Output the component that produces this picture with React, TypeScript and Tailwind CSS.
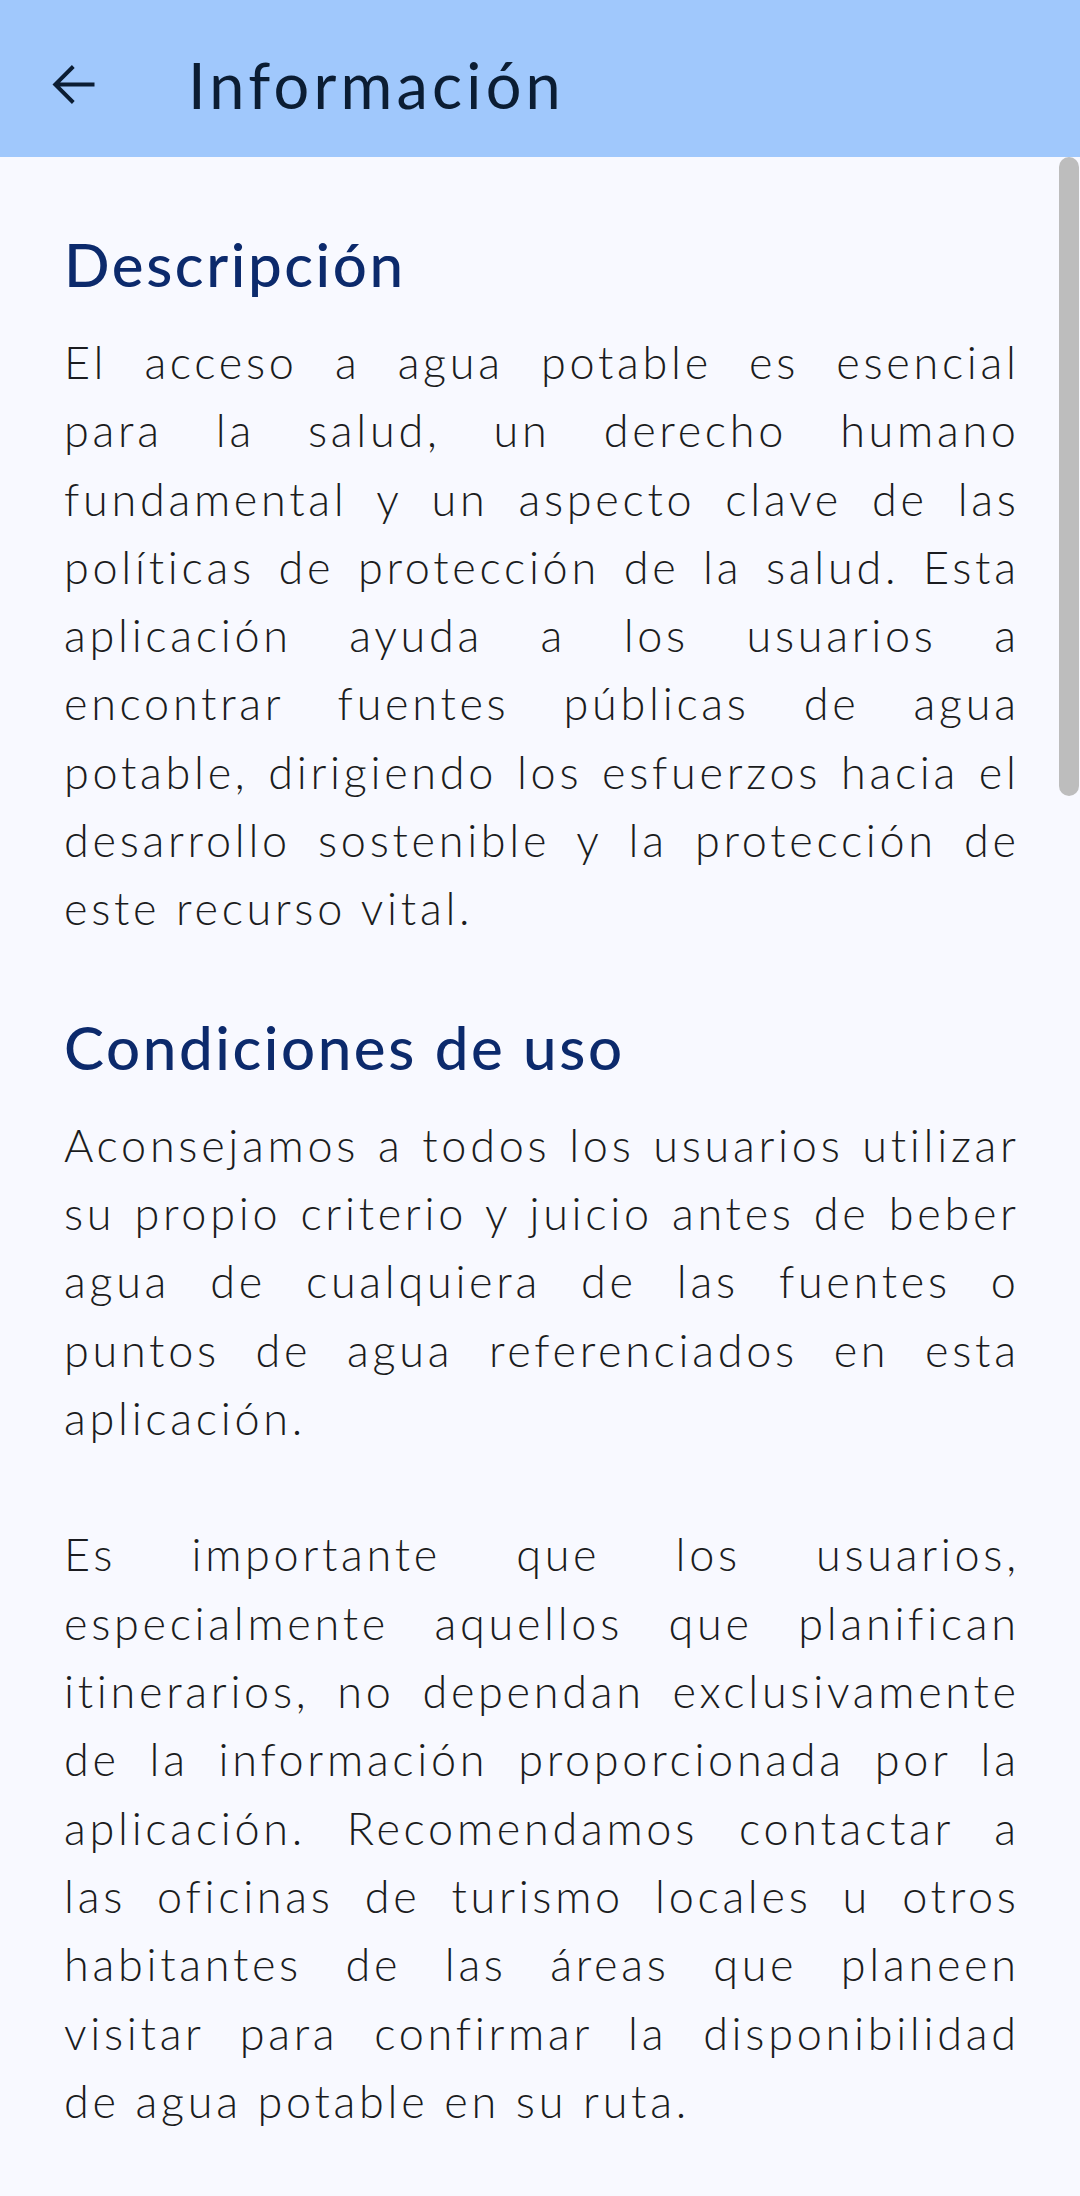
import React from 'react';

const FONT = "font-['Lato','Noto_Sans',sans-serif] [font-variant-ligatures:none]";

const descripcion = [
  'El acceso a agua potable es esencial',
  'para la salud, un derecho humano',
  'fundamental y un aspecto clave de las',
  'políticas de protección de la salud. Esta',
  'aplicación ayuda a los usuarios a',
  'encontrar fuentes públicas de agua',
  'potable, dirigiendo los esfuerzos hacia el',
  'desarrollo sostenible y la protección de',
  'este recurso vital.',
];

const condiciones1 = [
  'Aconsejamos a todos los usuarios utilizar',
  'su propio criterio y juicio antes de beber',
  'agua de cualquiera de las fuentes o',
  'puntos de agua referenciados en esta',
  'aplicación.',
];

const condiciones2 = [
  'Es importante que los usuarios,',
  'especialmente aquellos que planifican',
  'itinerarios, no dependan exclusivamente',
  'de la información proporcionada por la',
  'aplicación. Recomendamos contactar a',
  'las oficinas de turismo locales u otros',
  'habitantes de las áreas que planeen',
  'visitar para confirmar la disponibilidad',
  'de agua potable en su ruta.',
];

// Párrafo justificado, con los cortes de línea del original
function Paragraph({ lines }: { lines: string[] }) {
  return (
    <div className="text-[45px] leading-[68.3px] tracking-[3.7px] font-light text-[#1b1c20]">
      {lines.map((line, i) =>
        i < lines.length - 1 ? (
          <div key={i} className="text-justify [text-align-last:justify] -mr-[3.7px]">
            {line}
          </div>
        ) : (
          <div key={i} className="text-left">
            {line}
          </div>
        )
      )}
    </div>
  );
}

function Heading({ children }: { children: React.ReactNode }) {
  return (
    <h2 className="text-[60px] leading-[80px] tracking-[2.6px] font-medium text-[#0c2a6c]">
      {children}
    </h2>
  );
}

export default function App() {
  return (
    <div className={`${FONT} w-[1080px] h-[2196px] bg-[#f8f9ff] overflow-hidden`}>
      {/* Barra superior */}
      <header className="h-[157px] bg-[#a0c8fc] flex items-center pt-[11px] pl-[42px]">
        <svg className="w-[63px] h-[63px] text-[#0b1d33]" viewBox="0 0 24 24" fill="currentColor">
          <path d="M20 11.25H6.9l5.55-5.55L11.4 4.6 4 12l7.4 7.4 1.05-1.1-5.55-5.55H20v-1.5z" />
        </svg>
        <h1 className="ml-[83px] text-[63px] leading-none tracking-[4.2px] font-normal text-[#0b1d33]">
          Información
        </h1>
      </header>

      {/* Contenido */}
      <div className="relative">
        <main className="px-[64px] pt-[67px]">
          <Heading>Descripción</Heading>
          <div className="mt-[24px]">
            <Paragraph lines={descripcion} />
          </div>

          <div className="mt-[64px]">
            <Heading>Condiciones de uso</Heading>
          </div>
          <div className="mt-[24px] flex flex-col gap-[68.3px]">
            <Paragraph lines={condiciones1} />
            <Paragraph lines={condiciones2} />
          </div>
        </main>

        {/* Barra de desplazamiento */}
        <div className="absolute top-0 right-[1px] w-[20px] h-[639px] rounded-full bg-[#bdbdbd]" />
      </div>
    </div>
  );
}
